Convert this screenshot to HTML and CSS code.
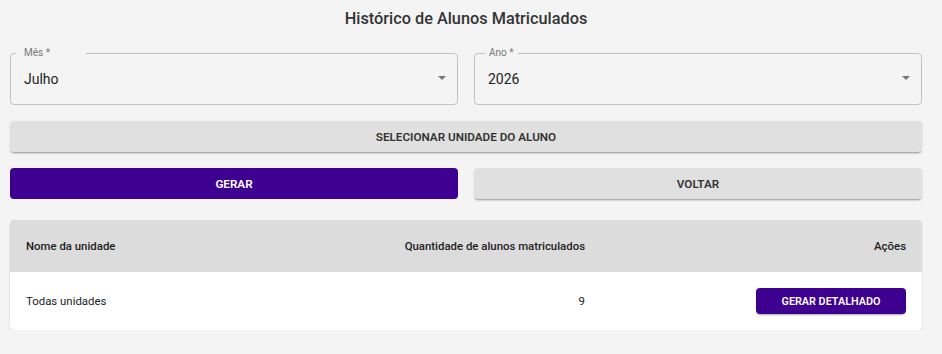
FILE: index.html
```html
<!DOCTYPE html>
<html lang="pt-BR">
<head>
<meta charset="utf-8">
<title>Histórico de Alunos Matriculados</title>
<link rel="stylesheet" href="styles.css">
</head>
<body>
<main class="page">
  <h1 class="title">Histórico de Alunos Matriculados</h1>
  <div class="fields">
    <div class="select">
      <span class="select-label label-mes">Mês *</span>
      <span class="select-value">Julho</span>
      <svg class="select-arrow" width="8" height="4" viewBox="0 0 8 4"><path d="M0 0h8L4 4z" fill="#757575"/></svg>
    </div>
    <div class="select">
      <span class="select-label label-ano">Ano *</span>
      <span class="select-value">2026</span>
      <svg class="select-arrow" width="8" height="4" viewBox="0 0 8 4"><path d="M0 0h8L4 4z" fill="#757575"/></svg>
    </div>
  </div>
  <button class="btn btn-grey btn-full">SELECIONAR UNIDADE DO ALUNO</button>
  <div class="actions">
    <button class="btn btn-primary">GERAR</button>
    <button class="btn btn-grey">VOLTAR</button>
  </div>
  <section class="table-card">
    <div class="trow thead">
      <div class="cell c-name">Nome da unidade</div>
      <div class="cell c-qty">Quantidade de alunos matriculados</div>
      <div class="cell c-act">Ações</div>
    </div>
    <div class="trow tbody">
      <div class="cell c-name">Todas unidades</div>
      <div class="cell c-qty">9</div>
      <div class="cell c-act"><button class="btn btn-primary btn-small">GERAR DETALHADO</button></div>
    </div>
  </section>
</main>
</body>
</html>
```
FILE: styles.css
```css
* { box-sizing: border-box; }
html, body { margin: 0; padding: 0; }
body {
  background: #f4f4f4;
  font-family: Roboto, "Liberation Sans", Arial, sans-serif;
  color: #222;
}
.page {
  width: 912px;
  margin-left: 10px;
  display: flex;
  flex-direction: column;
}
.title {
  margin: 8px 0 0;
  height: 22px;
  line-height: 22px;
  font-size: 16.3px;
  font-weight: 500;
  text-align: center;
  color: #333;
}
.fields {
  margin-top: 23px;
  display: grid;
  grid-template-columns: 1fr 1fr;
  gap: 16px;
}
.select {
  position: relative;
  height: 52px;
  border: 1px solid #c2c2c2;
  border-radius: 4px;
  display: flex;
  align-items: center;
  padding: 0 11px 0 13px;
}
.select-label {
  position: absolute;
  top: -7px;
  height: 12px;
  line-height: 12px;
  font-size: 10px;
  color: #777;
  background: #f4f4f4;
}
.label-mes { left: 5px; padding: 0 36px 0 8px; }
.label-ano { left: 10px; padding: 0 4px 0 4px; }
.select-value {
  font-size: 14px;
  color: #222;
  flex: 1;
}
.select-arrow { margin-top: -2px; }
.btn {
  border: 0;
  border-radius: 4px;
  font-family: Roboto, "Liberation Sans", Arial, sans-serif;
  font-size: 11.7px;
  font-weight: 600;
  letter-spacing: 0;
  height: 31px;
  cursor: pointer;
}
.btn-grey {
  background: #e0e0e0;
  color: #333;
  box-shadow: 0 2px 2px -1px rgba(0,0,0,0.35), 0 1px 3px rgba(0,0,0,0.08);
}
.btn-primary {
  background: #3d0090;
  color: #fff;
}
.btn-full { margin-top: 16px; width: 100%; }
.actions {
  margin-top: 16px;
  display: grid;
  grid-template-columns: 1fr 1fr;
  gap: 16px;
}
.table-card {
  margin-top: 21px;
  border-radius: 4px;
  overflow: hidden;
  background: #fff;
  box-shadow: 0 2px 2px -1px rgba(0,0,0,0.3), 0 1px 3px rgba(0,0,0,0.08);
}
.trow {
  display: grid;
  grid-template-columns: 1fr 1fr 321px;
  align-items: center;
  padding: 0 16px;
  font-size: 11.4px;
}
.thead {
  height: 52px;
  background: #dcdcdc;
  font-weight: 500;
  color: #222;
}
.tbody {
  height: 58px;
  background: #fff;
  color: #222;
}
.c-qty { text-align: right; }
.c-act { text-align: right; }
.btn-small {
  height: 26px;
  width: 150px;
  font-size: 10.8px;
  font-weight: 600;
  box-shadow: 0 2px 2px -1px rgba(0,0,0,0.35);
}
```
